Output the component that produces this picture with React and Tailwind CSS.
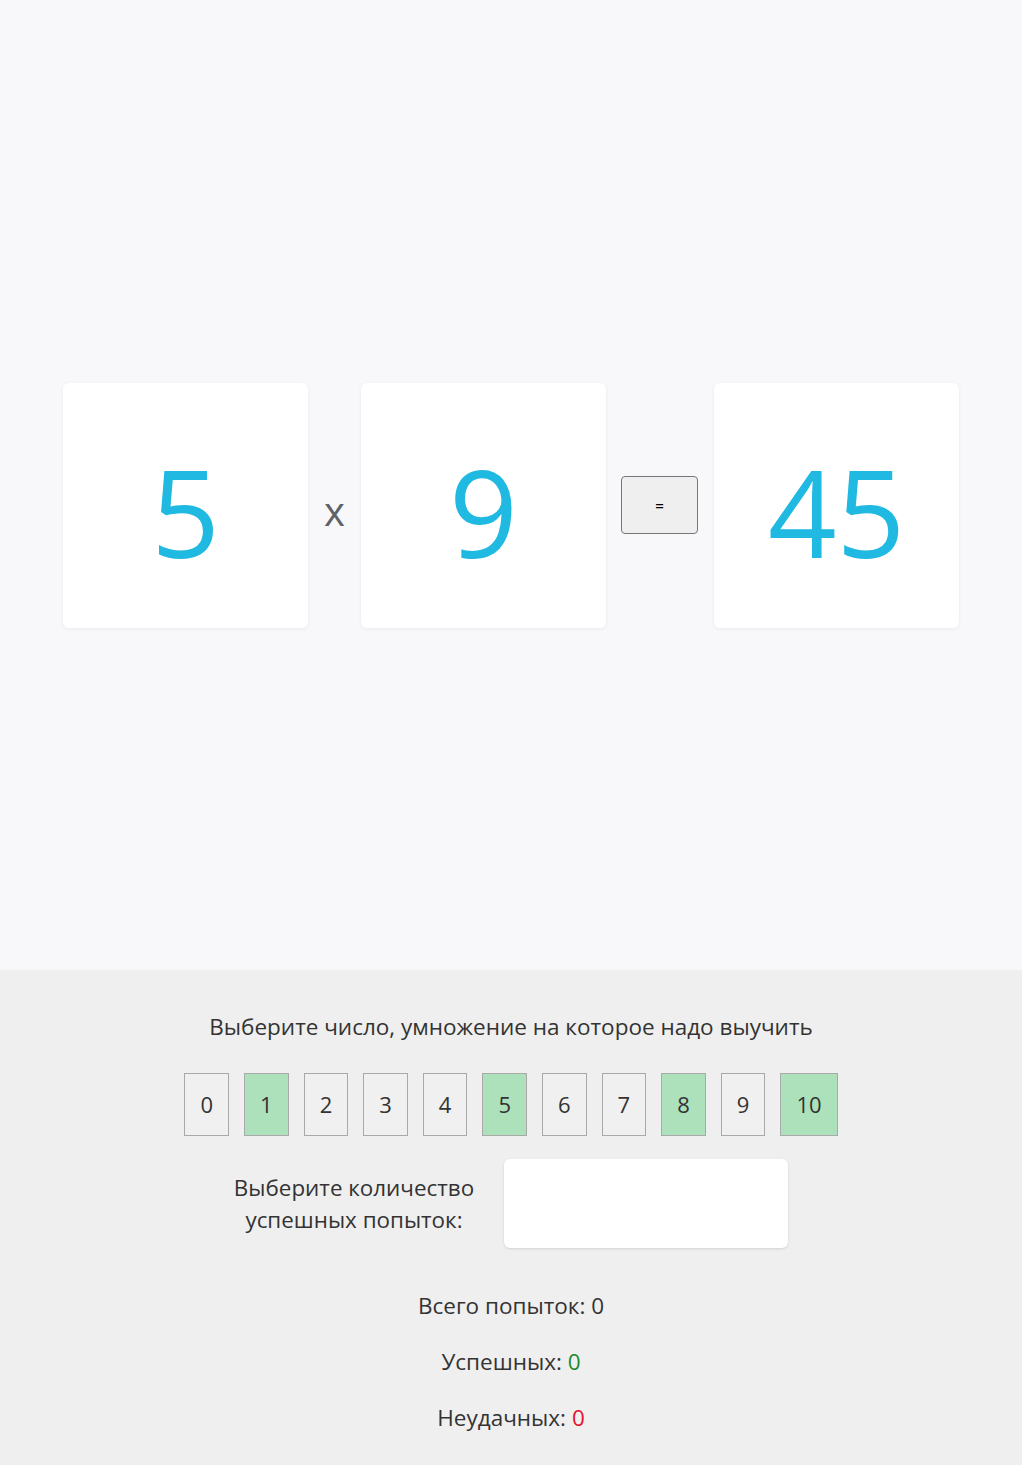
import { useState } from "react";

const font = { fontFamily: '"Open Sans", "Noto Sans", sans-serif' };

export default function App() {
  const [selected, setSelected] = useState([1, 5, 8, 10]);

  const toggle = (n) =>
    setSelected((s) => (s.includes(n) ? s.filter((x) => x !== n) : [...s, n]));

  return (
    <div className="w-full min-h-[1465px] flex flex-col" style={font}>
      <div className="h-[970px] bg-[#f8f8fa] flex items-center justify-center pt-[40px]">
        <div className="flex items-center">
          <Card value="5" />
          <span className="w-[53px] text-center text-[40px] text-[#5f6368] leading-none pt-[12px]">x</span>
          <Card value="9" />
          <button className="ml-[15px] mr-[16px] w-[77px] h-[58px] rounded-[4px] border border-[#767676] bg-[#efefef] text-[15px] font-semibold text-black">
            =
          </button>
          <Card value="45" />
        </div>
      </div>

      <div className="flex-1 bg-[#efefef] flex flex-col items-center pt-[42px] text-[#333]">
        <p className="text-[22.5px] leading-[30px]">Выберите число, умножение на которое надо выучить</p>

        <div className="flex gap-[15px] mt-[31px]">
          {[0, 1, 2, 3, 4, 5, 6, 7, 8, 9, 10].map((n) => (
            <button
              key={n}
              onClick={() => toggle(n)}
              className={`h-[63px] px-[15px] border border-[#a9a9a9] text-[22px] text-[#333] ${
                selected.includes(n) ? "bg-[#ace1bc]" : "bg-[#f0f0f0]"
              }`}
            >
              {n}
            </button>
          ))}
        </div>

        <div className="flex items-center gap-[30px] mt-[23px]">
          <p className="text-[22.4px] text-center leading-[32px] whitespace-nowrap">
            Выберите количество
            <br />
            успешных попыток:
          </p>
          <input className="w-[284px] h-[89px] bg-white rounded-[6px] shadow-sm outline-none px-3 text-[20px]" />
        </div>

        <div className="flex flex-col items-center gap-[26px] mt-[43px] text-[22.5px] leading-[30px]">
          <p>Всего попыток: 0</p>
          <p>
            Успешных: <span className="text-[#1a8a2a]">0</span>
          </p>
          <p>
            Неудачных: <span className="text-[#e8112d]">0</span>
          </p>
        </div>
      </div>
    </div>
  );
}

function Card({ value }) {
  return (
    <div className="w-[245px] h-[245px] bg-white rounded-[6px] shadow-[0_1px_4px_rgba(0,0,0,0.06)] flex items-center justify-center pt-[14px]">
      <span className="text-[120px] leading-none text-[#1fb9e1]">{value}</span>
    </div>
  );
}
